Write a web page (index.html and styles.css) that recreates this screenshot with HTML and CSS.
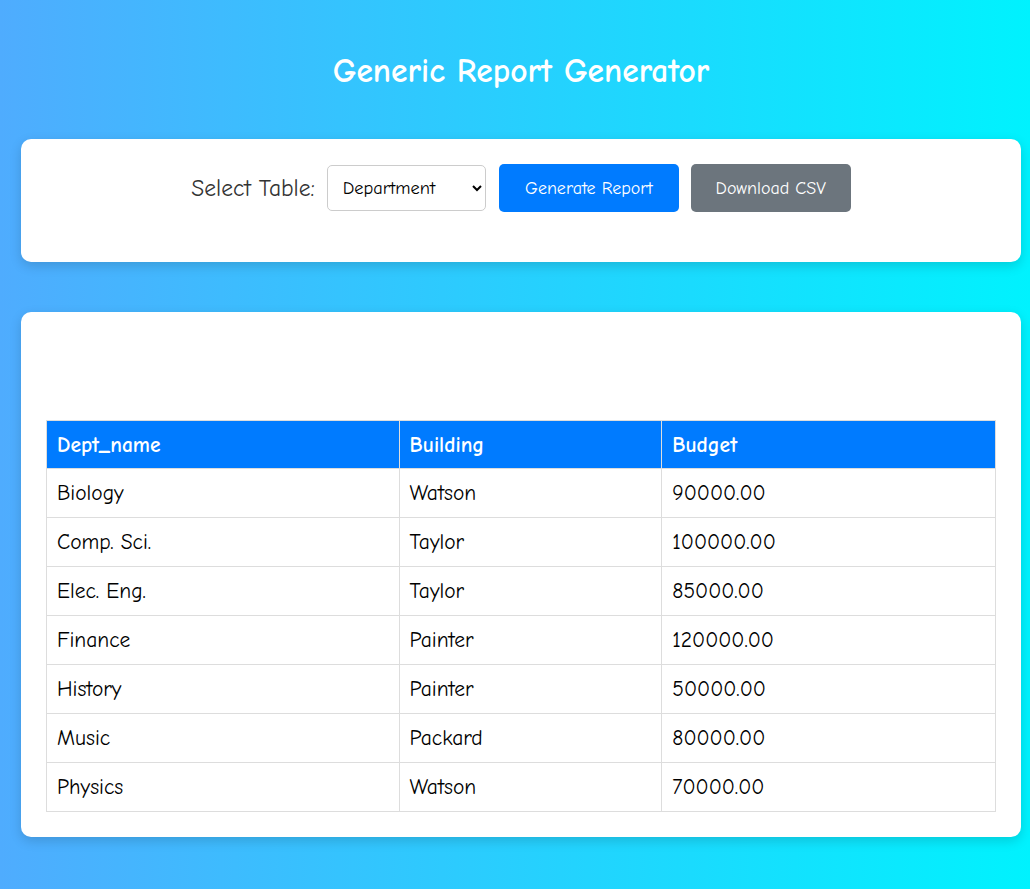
FILE: index.html
```html
<!DOCTYPE html>
<html lang="en">
<head>
<meta charset="utf-8">
<title>Generic Report Generator</title>
<link rel="stylesheet" href="styles.css">
</head>
<body>
<div class="container">
  <h1 class="title">Generic Report Generator</h1>
  <div class="card controls">
    <div class="control-row">
      <label class="label" for="tbl">Select Table:</label>
      <select id="tbl" class="select">
        <option>Department</option>
      </select>
      <button class="btn btn-primary">Generate Report</button>
      <button class="btn btn-secondary">Download CSV</button>
    </div>
  </div>
  <div class="card report">
    <div class="report-head"></div>
    <table class="data">
      <thead>
        <tr><th class="c1">Dept_name</th><th class="c2">Building</th><th class="c3">Budget</th></tr>
      </thead>
      <tbody>
        <tr><td>Biology</td><td>Watson</td><td>90000.00</td></tr>
        <tr><td>Comp. Sci.</td><td>Taylor</td><td>100000.00</td></tr>
        <tr><td>Elec. Eng.</td><td>Taylor</td><td>85000.00</td></tr>
        <tr><td>Finance</td><td>Painter</td><td>120000.00</td></tr>
        <tr><td>History</td><td>Painter</td><td>50000.00</td></tr>
        <tr><td>Music</td><td>Packard</td><td>80000.00</td></tr>
        <tr><td>Physics</td><td>Watson</td><td>70000.00</td></tr>
      </tbody>
    </table>
  </div>
</div>
</body>
</html>
```
FILE: styles.css
```css
html, body {
  margin: 0;
  padding: 0;
}
body {
  min-height: 889px;
  background: linear-gradient(to right, #4facfe, #00f2fe);
  font-family: "Comic Sans MS", "Comic Neue", cursive;
  color: #000;
}
.container {
  width: 1000px;
  margin-left: 21px;
  padding-top: 1px;
}
.title {
  margin: 48px 0 0;
  height: 90px;
  text-align: center;
  color: #fff;
  font-size: 33.5px;
  font-weight: bold;
  line-height: 44px;
}
.card {
  background: #fff;
  border-radius: 10px;
  box-shadow: 0 4px 12px rgba(0, 0, 0, 0.15);
}
.controls {
  height: 123px;
  box-sizing: border-box;
  padding-top: 25px;
}
.control-row {
  display: flex;
  justify-content: center;
  align-items: center;
  gap: 12px;
  height: 48px;
}
.label {
  font-size: 23.5px;
  color: #333;
  white-space: nowrap;
}
.select {
  width: 159px;
  height: 46px;
  border: 1px solid #ccc;
  border-radius: 5px;
  background: #fff;
  font-family: inherit;
  font-size: 18.4px;
  padding: 0 11px;
  color: #000;
}
.btn {
  height: 48px;
  border: none;
  border-radius: 5px;
  color: #fff;
  font-family: inherit;
  font-size: 18px;
  padding: 0 10px;
}
.btn-primary {
  width: 180px;
  background: #007bff;
  margin-left: 1px;
}
.btn-secondary {
  width: 160px;
  background: #6c757d;
}
.report {
  margin-top: 50px;
  padding: 0 25px 26px;
  box-sizing: border-box;
  height: 525px;
}
.report-head {
  height: 108px;
}
.data {
  width: 950px;
  border-collapse: collapse;
  font-size: 21.5px;
}
.data th, .data td {
  border: 1px solid #ddd;
  text-align: left;
  padding: 0 10px;
  height: 49px;
  box-sizing: border-box;
}
.data th {
  height: 48px;
  background: #007bff;
  color: #fff;
  font-weight: bold;
  font-size: 21.5px;
}
.c1 { width: 353px; }
.c2 { width: 263px; }
.c3 { width: 334px; }
```
